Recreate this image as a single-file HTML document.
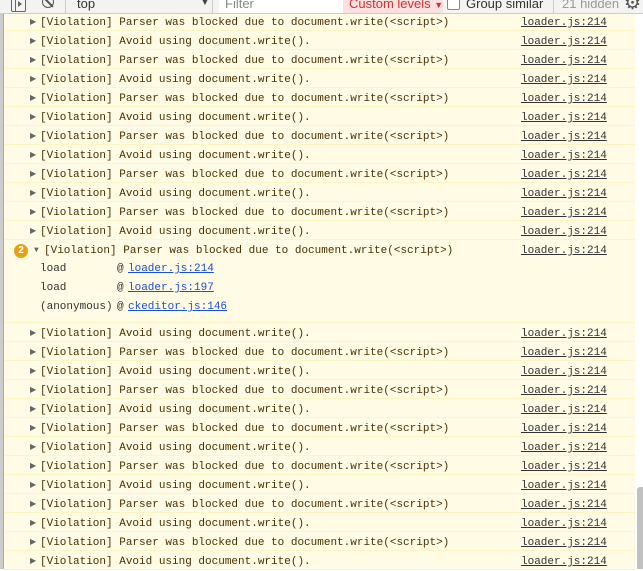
<!DOCTYPE html><html><head><style>
body{margin:0;width:643px;height:569px;overflow:hidden;position:relative;background:#fff;font-family:"Liberation Sans",sans-serif}
#tb{position:absolute;left:0;top:0;width:643px;height:13px;background:#f3f3f3;border-bottom:1px solid #ccc;z-index:2;overflow:hidden;font-size:13px;color:#333}
#tb span,#tb div{position:absolute}
#left{position:absolute;left:0;top:0;width:3px;height:569px;background:#ccc;border-right:1px solid #aaa}
#log{position:absolute;left:4px;top:12px;width:631px;background:#fffbe5}
.r{height:18px;border-bottom:1px solid #fff5c2;position:relative;font:11px "Liberation Mono",monospace;color:#4a3000;line-height:18px}
.r .t{position:absolute;left:36px;top:2px}
.r .a{position:absolute;left:26px;top:2px;font-size:8px;color:#666}
.r .l{position:absolute;left:517px;top:2px;color:#333;text-decoration:underline}
.s{position:absolute;font:11px "Liberation Mono",monospace;color:#333;line-height:18px;left:36px}
.s b{position:absolute;left:77px;font-weight:normal}
.s a{position:absolute;left:88px;color:#1a4fd0;text-decoration:underline;white-space:nowrap}
#thumb{position:absolute;left:637px;top:487px;width:6px;height:82px;background:#c1c1c1;border-radius:3px 0 0 0}
</style></head><body>
<div id="left"></div>
<div id="tb">
<div style="left:11px;top:-3px;width:13px;height:13px;border:1px solid #666;border-radius:2px"></div>
<div style="left:15px;top:-3px;width:1px;height:14px;background:#666"></div>
<div style="left:18px;top:1px;width:0;height:0;border-left:4px solid #666;border-top:3px solid transparent;border-bottom:3px solid transparent"></div>
<div style="left:42px;top:-4px;width:10px;height:10px;border:1.5px solid #555;border-radius:50%"></div>
<div style="left:47px;top:-5px;width:1.5px;height:14px;background:#555;transform:rotate(-45deg)"></div>
<div style="left:65px;top:0;width:1px;height:13px;background:#ccc"></div>
<span style="left:77px;top:-4px">top</span>
<span style="left:200px;top:-3px;font-size:10px;color:#444">▼</span>
<div style="left:212px;top:0;width:1px;height:13px;background:#ccc"></div>
<div style="left:219px;top:0;width:124px;height:13px;background:#fff"></div>
<span style="left:225px;top:-4px;color:#888">Filter</span>
<div style="left:343px;top:0;width:100px;height:13px;background:#fbe0e0"></div>
<span style="left:349px;top:-4px;color:#c33">Custom levels <span style="position:static;font-size:9px">▼</span></span>
<div style="left:447px;top:-3px;width:11px;height:11px;border:1px solid #888;border-radius:2px;background:#fff"></div>
<span style="left:466px;top:-4px">Group similar</span>
<div style="left:553px;top:0;width:1px;height:13px;background:#ccc"></div>
<span style="left:562px;top:-4px;color:#999">21 hidden</span>
<span style="left:624px;top:-8px;font-size:19px;color:#555">⚙</span>
</div>
<div id="log">
<div class="r"><span class="a">▶</span><span class="t">[Violation] Parser was blocked due to document.write(&lt;script&gt;)</span><span class="l">loader.js:214</span></div>
<div class="r"><span class="a">▶</span><span class="t">[Violation] Avoid using document.write().</span><span class="l">loader.js:214</span></div>
<div class="r"><span class="a">▶</span><span class="t">[Violation] Parser was blocked due to document.write(&lt;script&gt;)</span><span class="l">loader.js:214</span></div>
<div class="r"><span class="a">▶</span><span class="t">[Violation] Avoid using document.write().</span><span class="l">loader.js:214</span></div>
<div class="r"><span class="a">▶</span><span class="t">[Violation] Parser was blocked due to document.write(&lt;script&gt;)</span><span class="l">loader.js:214</span></div>
<div class="r"><span class="a">▶</span><span class="t">[Violation] Avoid using document.write().</span><span class="l">loader.js:214</span></div>
<div class="r"><span class="a">▶</span><span class="t">[Violation] Parser was blocked due to document.write(&lt;script&gt;)</span><span class="l">loader.js:214</span></div>
<div class="r"><span class="a">▶</span><span class="t">[Violation] Avoid using document.write().</span><span class="l">loader.js:214</span></div>
<div class="r"><span class="a">▶</span><span class="t">[Violation] Parser was blocked due to document.write(&lt;script&gt;)</span><span class="l">loader.js:214</span></div>
<div class="r"><span class="a">▶</span><span class="t">[Violation] Avoid using document.write().</span><span class="l">loader.js:214</span></div>
<div class="r"><span class="a">▶</span><span class="t">[Violation] Parser was blocked due to document.write(&lt;script&gt;)</span><span class="l">loader.js:214</span></div>
<div class="r"><span class="a">▶</span><span class="t">[Violation] Avoid using document.write().</span><span class="l">loader.js:214</span></div>
<div class="r" style="height:82px">
<div style="position:absolute;left:10px;top:4px;width:14px;height:14px;border-radius:50%;background:#e8a010;color:#fff;font:bold 10px 'Liberation Sans',sans-serif;text-align:center;line-height:14px">2</div>
<span class="a" style="left:30px">▼</span><span class="t" style="left:40px">[Violation] Parser was blocked due to document.write(&lt;script&gt;)</span><span class="l">loader.js:214</span>
<div class="s" style="top:20px">load<b>@</b><a>loader.js:214</a></div>
<div class="s" style="top:39px">load<b>@</b><a>loader.js:197</a></div>
<div class="s" style="top:58px">(anonymous)<b>@</b><a>ckeditor.js:146</a></div>
</div>
<div class="r"><span class="a">▶</span><span class="t">[Violation] Avoid using document.write().</span><span class="l">loader.js:214</span></div>
<div class="r"><span class="a">▶</span><span class="t">[Violation] Parser was blocked due to document.write(&lt;script&gt;)</span><span class="l">loader.js:214</span></div>
<div class="r"><span class="a">▶</span><span class="t">[Violation] Avoid using document.write().</span><span class="l">loader.js:214</span></div>
<div class="r"><span class="a">▶</span><span class="t">[Violation] Parser was blocked due to document.write(&lt;script&gt;)</span><span class="l">loader.js:214</span></div>
<div class="r"><span class="a">▶</span><span class="t">[Violation] Avoid using document.write().</span><span class="l">loader.js:214</span></div>
<div class="r"><span class="a">▶</span><span class="t">[Violation] Parser was blocked due to document.write(&lt;script&gt;)</span><span class="l">loader.js:214</span></div>
<div class="r"><span class="a">▶</span><span class="t">[Violation] Avoid using document.write().</span><span class="l">loader.js:214</span></div>
<div class="r"><span class="a">▶</span><span class="t">[Violation] Parser was blocked due to document.write(&lt;script&gt;)</span><span class="l">loader.js:214</span></div>
<div class="r"><span class="a">▶</span><span class="t">[Violation] Avoid using document.write().</span><span class="l">loader.js:214</span></div>
<div class="r"><span class="a">▶</span><span class="t">[Violation] Parser was blocked due to document.write(&lt;script&gt;)</span><span class="l">loader.js:214</span></div>
<div class="r"><span class="a">▶</span><span class="t">[Violation] Avoid using document.write().</span><span class="l">loader.js:214</span></div>
<div class="r"><span class="a">▶</span><span class="t">[Violation] Parser was blocked due to document.write(&lt;script&gt;)</span><span class="l">loader.js:214</span></div>
<div class="r"><span class="a">▶</span><span class="t">[Violation] Avoid using document.write().</span><span class="l">loader.js:214</span></div>
</div>
<div id="thumb"></div>
</body></html>
